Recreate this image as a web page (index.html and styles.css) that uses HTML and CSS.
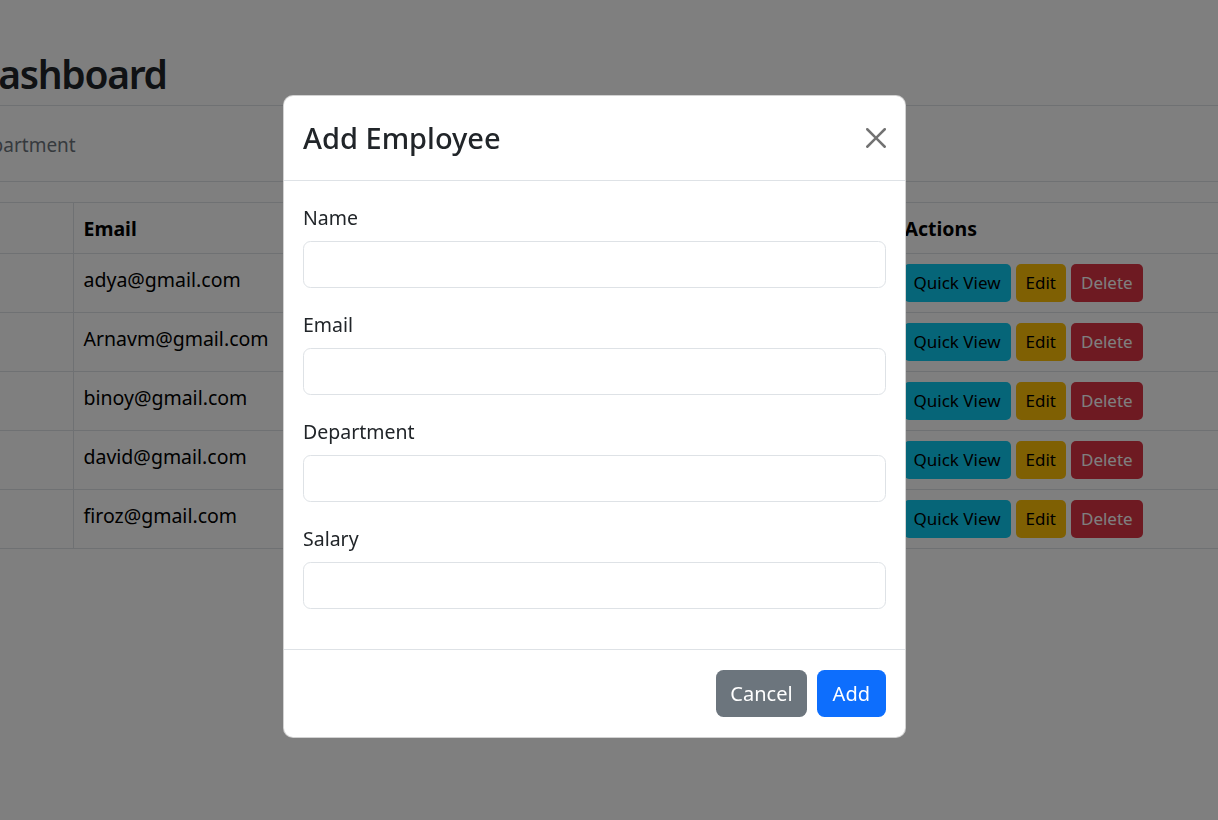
FILE: index.html
```html
<!DOCTYPE html>
<html lang="en">
<head>
<meta charset="utf-8">
<title>Dashboard</title>
<link rel="stylesheet" href="styles.css">
</head>
<body>
<div class="page">
  <header class="page-head">
    <h1 class="title">Dashboard</h1>
  </header>
  <div class="filter-bar">
    <span class="filter-text">Department</span>
  </div>
  <table class="emp-table">
    <colgroup>
      <col class="c-name"><col class="c-email"><col class="c-dept"><col class="c-sal"><col class="c-act">
    </colgroup>
    <thead>
      <tr><th>Name</th><th>Email</th><th>Department</th><th>Salary</th><th>Actions</th></tr>
    </thead>
    <tbody>
      <tr><td>Adya</td><td>adya@gmail.com</td><td>HR</td><td>50000</td><td class="actions"><button class="b b-info">Quick View</button><button class="b b-warn">Edit</button><button class="b b-danger">Delete</button></td></tr>
      <tr><td>Arnav</td><td>Arnavm@gmail.com</td><td>IT</td><td>60000</td><td class="actions"><button class="b b-info">Quick View</button><button class="b b-warn">Edit</button><button class="b b-danger">Delete</button></td></tr>
      <tr><td>Binoy</td><td>binoy@gmail.com</td><td>Sales</td><td>45000</td><td class="actions"><button class="b b-info">Quick View</button><button class="b b-warn">Edit</button><button class="b b-danger">Delete</button></td></tr>
      <tr><td>David</td><td>david@gmail.com</td><td>Finance</td><td>70000</td><td class="actions"><button class="b b-info">Quick View</button><button class="b b-warn">Edit</button><button class="b b-danger">Delete</button></td></tr>
      <tr><td>Firoz</td><td>firoz@gmail.com</td><td>IT</td><td>55000</td><td class="actions"><button class="b b-info">Quick View</button><button class="b b-warn">Edit</button><button class="b b-danger">Delete</button></td></tr>
    </tbody>
  </table>
</div>

<div class="backdrop"></div>

<div class="modal">
  <div class="modal-header">
    <h5 class="modal-title">Add Employee</h5>
    <button class="btn-close" aria-label="Close">
      <svg viewBox="0 0 16 16" width="20" height="20"><path d="M.293.293a1 1 0 0 1 1.414 0L8 6.586 14.293.293a1 1 0 1 1 1.414 1.414L9.414 8l6.293 6.293a1 1 0 0 1-1.414 1.414L8 9.414l-6.293 6.293a1 1 0 0 1-1.414-1.414L6.586 8 .293 1.707a1 1 0 0 1 0-1.414z"/></svg>
    </button>
  </div>
  <div class="modal-body">
    <div class="field"><label class="lbl">Name</label><input class="ctl" type="text"></div>
    <div class="field"><label class="lbl">Email</label><input class="ctl" type="text"></div>
    <div class="field"><label class="lbl">Department</label><input class="ctl" type="text"></div>
    <div class="field"><label class="lbl">Salary</label><input class="ctl" type="text"></div>
  </div>
  <div class="modal-footer">
    <button class="fb fb-sec">Cancel</button>
    <button class="fb fb-pri">Add</button>
  </div>
</div>
</body>
</html>
```

FILE: styles.css
```css
html, body {
  margin: 0;
  padding: 0;
  overflow: hidden;
  width: 1218px;
  height: 820px;
}
body {
  background: #fff;
  font-family: "Noto Sans", "Open Sans", sans-serif;
  font-size: 19.5px;
  line-height: 1.5;
  color: #212529;
}
.page {
  margin-left: -30px;
  width: 1330px;
}
.page-head {
  padding-top: 47px;
  padding-bottom: 4px;
  border-bottom: 1px solid #dee2e6;
}
.title {
  margin: 0;
  padding-left: 1px;
  font-size: 39px;
  font-weight: 600;
  letter-spacing: -1.3px;
  line-height: 54px;
  color: #212529;
}
.filter-bar {
  height: 75px;
  display: flex;
  align-items: center;
  border-bottom: 1px solid #dee2e6;
  margin-bottom: 20px;
}
.filter-text {
  padding-top: 3px;
  margin-left: -3px;
  color: #6c757d;
  font-size: 19px;
}
.emp-table {
  border-collapse: collapse;
  table-layout: fixed;
  width: 1494px;
  margin-left: -170px;
  color: #000;
}
.c-name { width: 273px; }
.c-email { width: 260px; }
.c-dept { width: 280px; }
.c-sal { width: 281px; }
.c-act { width: 400px; }
.emp-table th, .emp-table td {
  border: 1px solid #dee2e6;
  border-left: 0;
  border-right: 0;
  padding: 11px 10px 9px;
  text-align: left;
  vertical-align: top;
}
.emp-table th + th, .emp-table td + td {
  border-left: 1px solid #dee2e6;
}
.emp-table th {
  font-weight: 700;
  line-height: 30px;
}
.emp-table td {
  line-height: 30px;
  height: 38px;
  box-sizing: content-box;
}
.emp-table td.actions {
  padding: 10px 10px 10px 9px;
}
.b {
  font-family: inherit;
  font-size: 17px;
  line-height: 26px;
  padding: 5px 9px;
  border: 1px solid transparent;
  border-radius: 5px;
  margin-right: 5px;
  vertical-align: top;
}
.b-info { background: #0dcaf0; color: #000; }
.b-warn { background: #ffc107; color: #000; }
.b-danger { background: #dc3545; color: #fff; }

.backdrop {
  position: fixed;
  inset: 0;
  background: rgba(0, 0, 0, 0.5);
}
.modal {
  position: absolute;
  left: 283px;
  top: 95px;
  width: 623px;
  box-sizing: border-box;
  background: #fff;
  border: 1px solid rgba(0, 0, 0, 0.175);
  border-radius: 10px;
  color: #212529;
}
.modal-header {
  display: flex;
  align-items: center;
  justify-content: space-between;
  padding: 20px 19px;
  border-bottom: 1px solid #dee2e6;
}
.modal-title {
  margin: 0;
  font-size: 29px;
  font-weight: 500;
  line-height: 44px;
}
.btn-close {
  background: none;
  border: 0;
  padding: 0;
  width: 20px;
  height: 20px;
  opacity: 0.55;
  display: flex;
}
.btn-close svg { fill: #000; }
.modal-body {
  padding: 20px 19px;
}
.field {
  margin-bottom: 20px;
}
.lbl {
  display: block;
  margin-bottom: 10px;
  padding-top: 2px;
  height: 28px;
  line-height: 30px;
}
.ctl {
  display: block;
  box-sizing: border-box;
  width: 100%;
  height: 47px;
  border: 1px solid #dee2e6;
  border-radius: 7.5px;
  background: #fff;
  font: inherit;
  padding: 7px 15px;
}
.modal-footer {
  display: flex;
  justify-content: flex-end;
  gap: 10px;
  padding: 20px 19px;
  border-top: 1px solid #dee2e6;
}
.fb {
  font-family: inherit;
  font-size: 20px;
  line-height: 30px;
  padding: 7.5px 13px;
  border: 1px solid transparent;
  border-radius: 7.5px;
  color: #fff;
}
.fb-sec { background: #6c757d; }
.fb-pri { background: #0d6efd; padding: 7.5px 15px; }
```
